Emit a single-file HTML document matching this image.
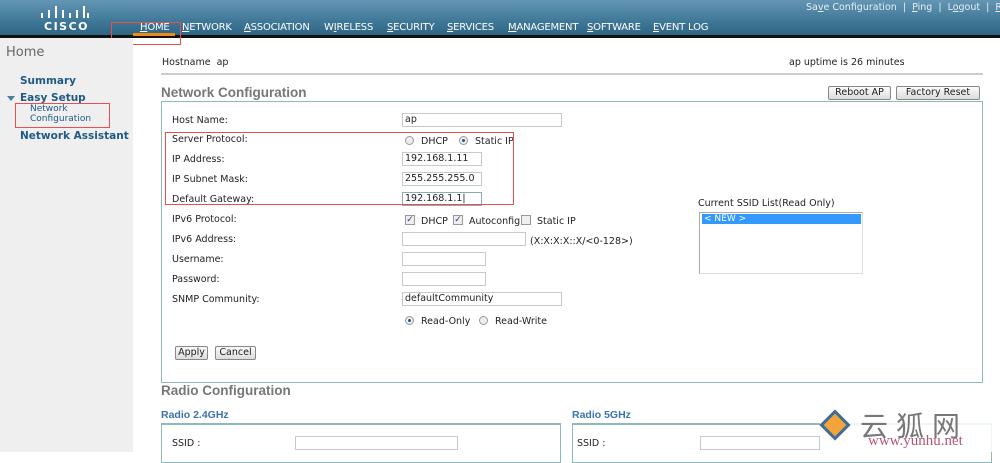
<!DOCTYPE html>
<html><head><meta charset="utf-8"><style>
*{margin:0;padding:0;box-sizing:border-box}
body{width:1000px;height:452px;overflow:hidden;background:#fff;font-family:Tahoma,"DejaVu Sans","Liberation Sans",sans-serif;font-size:10px;color:#222;position:relative}
.a{position:absolute;white-space:nowrap}
#hd{left:0;top:0;width:1000px;height:36px;background:linear-gradient(#6496b4,#3f7797 60%,#2d6484)}
#blk{left:0;top:35px;width:1000px;height:3px;background:#111}
.nav{top:22px;color:#fff;font-size:10px;letter-spacing:-0.2px}
.nav u{text-decoration:underline}
.tl{top:2px;color:#e6eef4;font-size:9.5px}
#sb{left:0;top:38px;width:133px;height:414px;background:#efefef}
.sl{color:#1f5a85;font-weight:bold;font-size:10.5px;font-family:"DejaVu Sans",sans-serif}
.lb{left:172px;font-size:9.5px}
.in{position:absolute;height:14px;border:1px solid #c9c9c9;background:#fff;font-size:9.5px;padding-left:2px;line-height:12px}
.btn{position:absolute;height:14px;border:1px solid #888;border-radius:2px;background:linear-gradient(#fafafa,#dcdcdc);font-size:9.5px;text-align:center;line-height:12px}
.rd{position:absolute;width:9px;height:9px;border-radius:50%;border:1px solid #999;background:#eee}
.rd.on::after{content:"";position:absolute;left:2px;top:2px;width:3px;height:3px;border-radius:50%;background:#1b5c8c}
.cb{position:absolute;width:10px;height:10px;border:1px solid #999;background:#eee;font-size:9px;line-height:8px;color:#2346a0;text-align:center}
.red{position:absolute;border:1px solid #e85050}
.h{font-size:13.5px;font-weight:bold;color:#777;font-family:"Liberation Sans",sans-serif}
</style></head><body>
<div class="a" id="hd"></div><div class="a" id="blk"></div>
<svg class="a" style="left:40px;top:5px" width="50" height="14"><g stroke="#fff" stroke-width="2"><line x1="2" y1="8" x2="2" y2="13"/><line x1="9" y1="5" x2="9" y2="13"/><line x1="16" y1="1" x2="16" y2="13"/><line x1="23" y1="5" x2="23" y2="13"/><line x1="30" y1="8" x2="30" y2="13"/><line x1="37" y1="5" x2="37" y2="13"/><line x1="44" y1="1" x2="44" y2="13"/><line x1="48" y1="8" x2="48" y2="13"/></g></svg>
<div class="a" style="left:44px;top:20px;color:#fff;font-weight:bold;font-size:11px;letter-spacing:1.5px;font-family:'DejaVu Sans',sans-serif">CISCO</div>
<div class="a" style="left:133px;top:33px;width:42px;height:3px;background:#f08a12"></div>
<div class="a nav" style="left:140px"><u>H</u>OME</div>
<div class="a nav" style="left:182px"><u>N</u>ETWORK</div>
<div class="a nav" style="left:244px"><u>A</u>SSOCIATION</div>
<div class="a nav" style="left:324px">W<u>I</u>RELESS</div>
<div class="a nav" style="left:387px"><u>S</u>ECURITY</div>
<div class="a nav" style="left:447px"><u>S</u>ERVICES</div>
<div class="a nav" style="left:508px"><u>M</u>ANAGEMENT</div>
<div class="a nav" style="left:587px"><u>S</u>OFTWARE</div>
<div class="a nav" style="left:653px"><u>E</u>VENT LOG</div>
<div class="a tl" style="left:806px">Sa<u>v</u>e Configuration &nbsp;| &nbsp;<u>P</u>ing &nbsp;| &nbsp;L<u>o</u>gout &nbsp;| &nbsp;<u>R</u>efresh</div>
<div class="red" style="left:111px;top:22px;width:70px;height:23px"></div>

<div class="a" id="sb"></div>
<div class="a" style="left:6px;top:45px;font-size:13px;color:#666;font-family:'DejaVu Sans',sans-serif">Home</div>
<div class="a sl" style="left:20px;top:75px">Summary</div>
<div class="a" style="left:7px;top:96px;width:0;height:0;border-left:4px solid transparent;border-right:4px solid transparent;border-top:5px solid #4a7fa5"></div>
<div class="a sl" style="left:20px;top:92px">Easy Setup</div>
<div class="a" style="left:30px;top:105px;color:#1f5a85;font-size:9px;line-height:9.5px">Network<br>Configuration</div>
<div class="red" style="left:15px;top:103px;width:95px;height:25px"></div>
<div class="a sl" style="left:20px;top:130px">Network Assistant</div>

<div class="a" style="left:162px;top:57px;font-size:9.5px">Hostname &nbsp;ap</div>
<div class="a" style="left:789px;top:57px;font-size:9.5px">ap uptime is 26 minutes</div>
<div class="a" style="left:161px;top:73px;width:822px;height:2px;background:#ccc"></div>
<div class="a h" style="left:161px;top:85px">Network Configuration</div>
<div class="btn" style="left:828px;top:86px;width:63px">Reboot AP</div>
<div class="btn" style="left:896px;top:86px;width:84px">Factory Reset</div>
<div class="a" style="left:161px;top:101px;width:822px;height:282px;border:1px solid #8fb8b8"></div>

<div class="a lb" style="top:115px">Host Name:</div><div class="in" style="left:402px;top:113px;width:160px">ap</div>
<div class="a lb" style="top:134px">Server Protocol:</div>
<div class="rd" style="left:405px;top:136px"></div><div class="a" style="left:421px;top:136px;font-size:9.5px">DHCP</div>
<div class="rd on" style="left:459px;top:136px"></div><div class="a" style="left:475px;top:136px;font-size:9.5px">Static IP</div>
<div class="a lb" style="top:154px">IP Address:</div><div class="in" style="left:402px;top:152px;width:80px">192.168.1.11</div>
<div class="a lb" style="top:174px">IP Subnet Mask:</div><div class="in" style="left:402px;top:172px;width:80px">255.255.255.0</div>
<div class="a lb" style="top:194px">Default Gateway:</div><div class="in" style="left:402px;top:192px;width:80px;border-color:#8ab">192.168.1.1|</div>
<div class="red" style="left:165px;top:132px;width:349px;height:73px"></div>
<div class="a lb" style="top:214px">IPv6 Protocol:</div>
<div class="cb" style="left:405px;top:215px">✓</div><div class="a" style="left:421px;top:216px;font-size:9.5px">DHCP</div>
<div class="cb" style="left:453px;top:215px">✓</div><div class="a" style="left:469px;top:216px;font-size:9.5px">Autoconfig</div>
<div class="cb" style="left:521px;top:215px"></div><div class="a" style="left:537px;top:216px;font-size:9.5px">Static IP</div>
<div class="a lb" style="top:234px">IPv6 Address:</div><div class="in" style="left:402px;top:232px;width:124px"></div>
<div class="a" style="left:530px;top:236px;font-size:9.5px">(X:X:X:X::X/&lt;0-128&gt;)</div>
<div class="a lb" style="top:254px">Username:</div><div class="in" style="left:402px;top:252px;width:84px"></div>
<div class="a lb" style="top:274px">Password:</div><div class="in" style="left:402px;top:272px;width:84px"></div>
<div class="a lb" style="top:294px">SNMP Community:</div><div class="in" style="left:402px;top:292px;width:160px">defaultCommunity</div>
<div class="rd on" style="left:405px;top:316px"></div><div class="a" style="left:421px;top:316px;font-size:9.5px">Read-Only</div>
<div class="rd" style="left:479px;top:316px"></div><div class="a" style="left:495px;top:316px;font-size:9.5px">Read-Write</div>
<div class="btn" style="left:175px;top:346px;width:33px">Apply</div>
<div class="btn" style="left:215px;top:346px;width:41px">Cancel</div>

<div class="a" style="left:698px;top:198px;font-size:9.5px">Current SSID List(Read Only)</div>
<div class="a" style="left:699px;top:212px;width:164px;height:62px;border:1px solid #aaa;border-right-color:#ddd;border-bottom-color:#ddd"></div>
<div class="a" style="left:702px;top:214px;width:159px;height:10px;background:#3399ff;color:#fff;font-size:9px;line-height:10px;padding-left:2px">&lt; NEW &gt;</div>

<div class="a h" style="left:161px;top:383px">Radio Configuration</div>
<div class="a" style="left:161px;top:409px;font-size:10.5px;font-weight:bold;color:#3a74b0;font-family:'Liberation Sans',sans-serif">Radio 2.4GHz</div>
<div class="a" style="left:572px;top:409px;font-size:10.5px;font-weight:bold;color:#3a74b0;font-family:'Liberation Sans',sans-serif">Radio 5GHz</div>
<div class="a" style="left:161px;top:423px;width:400px;height:40px;border:1px solid #8fb8b8;border-top-width:2px"></div>
<div class="a" style="left:572px;top:423px;width:420px;height:40px;border:1px solid #8fb8b8;border-top-width:2px"></div>
<div class="a" style="left:172px;top:438px;font-size:9.5px">SSID :</div>
<div class="in" style="left:295px;top:436px;width:163px"></div>
<div class="a" style="left:577px;top:438px;font-size:9.5px">SSID :</div>
<div class="in" style="left:700px;top:436px;width:120px"></div>
<div class="a" style="left:820px;top:405px;width:180px;height:47px;background:rgba(255,255,255,.85)"></div>
<div class="a" style="left:824px;top:414px;width:22px;height:22px;transform:rotate(45deg);border:3px solid #3e6d9a;background:#f2a33a"></div>
<div class="a" style="left:860px;top:405px;font-size:28px;color:#777;font-family:'Noto Sans CJK SC',sans-serif;letter-spacing:8px">云狐网</div>
<div class="a" style="left:868px;top:433px;font-size:15px;color:#b05a70;font-family:'Liberation Serif',serif">www.yunhu.net</div>
</body></html>
